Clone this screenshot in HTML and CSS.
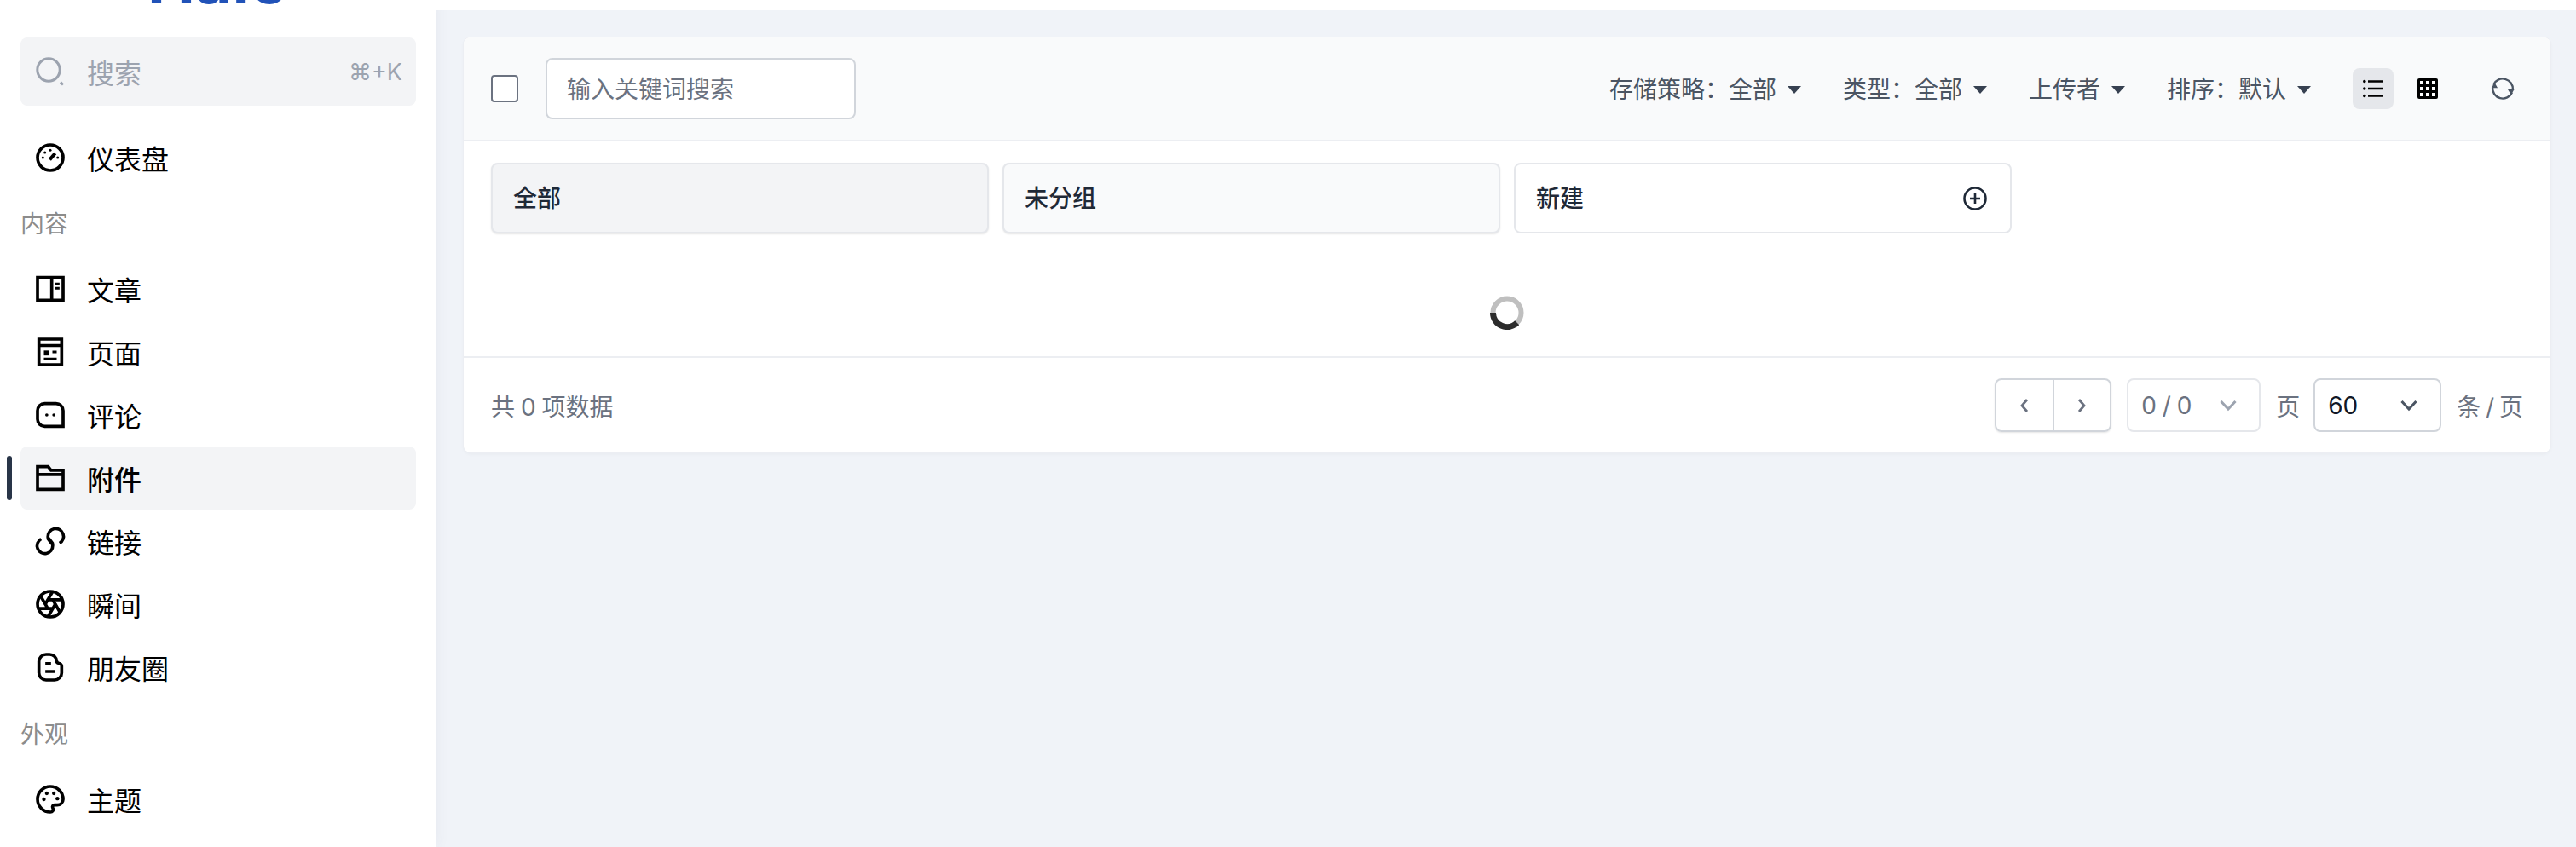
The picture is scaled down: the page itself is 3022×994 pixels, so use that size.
FILE: index.html
```html
<!DOCTYPE html>
<html lang="zh-CN">
<head>
<meta charset="utf-8">
<title>附件</title>
<link rel="stylesheet" href="styles.css">
</head>
<body>
<aside class="sidebar">
  <div class="logo"><span>Halo</span></div>
  <div class="search">
    <svg class="ico" viewBox="0 0 40 40"><circle cx="18" cy="18" r="13.2"/><path d="M32 32.5l3 3"/></svg>
    <span class="search-text">搜索</span>
    <span class="kbd">⌘+K</span>
  </div>
  <nav class="nav">
    <a class="item">
      <svg class="ico" viewBox="0 0 24 24"><circle cx="12" cy="12" r="9"/><path d="M11.6 13.4L15.4 9" stroke-width="2.4"/><circle class="dot" cx="12" cy="6.8" r=".9"/><circle class="dot" cx="8.2" cy="8.4" r=".9"/><circle class="dot" cx="6.8" cy="12" r=".9"/><circle class="dot" cx="17.2" cy="12" r=".9"/></svg>
      <span>仪表盘</span>
    </a>
    <div class="label">内容</div>
    <a class="item">
      <svg class="ico" viewBox="0 0 24 24"><path d="M3 4h18v16H3zM13 4v16"/><path d="M15.500 8.500h3M15.500 11.500h3" stroke-width="1.800"/></svg>
      <span>文章</span>
    </a>
    <a class="item">
      <svg class="ico" viewBox="0 0 24 24"><path d="M4 3h16v18H4zM4 7.500h16"/><path d="M7.500 14.500h3.500v-3.500H7.500z" class="fill"/><path d="M13.500 12h3M7.500 17h9" stroke-width="1.800"/></svg>
      <span>页面</span>
    </a>
    <a class="item">
      <svg class="ico" viewBox="0 0 24 24"><path d="M8 4h8a5 5 0 0 1 5 5v11H8a5 5 0 0 1-5-5V9a5 5 0 0 1 5-5z"/><circle class="dot" cx="9.500" cy="12" r="1.100"/><circle class="dot" cx="14.500" cy="12" r="1.100"/></svg>
      <span>评论</span>
    </a>
    <a class="item active">
      <svg class="ico" viewBox="0 0 24 24"><path d="M3 4h7.500l2 2.500H21V20H3zM3 9.500h18"/></svg>
      <span>附件</span>
    </a>
    <a class="item">
      <svg class="ico" viewBox="0 0 24 24"><path d="M18.500 13.500a5.500 5.500 0 1 0-8.200-4.600l.2 1.600 2.700 3.500"/><path d="M5.500 10.500a5.500 5.500 0 1 0 8.200 4.600l-.2-1.600-2.700-3.500"/></svg>
      <span>链接</span>
    </a>
    <a class="item">
      <svg class="ico" viewBox="0 0 24 24"><circle cx="12" cy="12" r="9"/><path d="M15.500 12L13.750 15.030H10.250L8.500 12 10.250 8.970H13.750zM13.750 15.030L10.390 20.850M10.250 15.030H3.530M8.500 12L5.140 6.180M10.250 8.970L13.610 3.150M13.750 8.970H20.470M15.500 12L18.860 17.820"/></svg>
      <span>瞬间</span>
    </a>
    <a class="item">
      <svg class="ico" viewBox="0 0 24 24"><path d="M4 8a5 5 0 0 1 5-5h2.500a5 5 0 0 1 5 4.700c0 1 .7 1.500 1.700 1.600 1 .1 1.800 1 1.800 2V16a5 5 0 0 1-5 5H9a5 5 0 0 1-5-5z"/><path d="M8.500 9.500h4M8.500 15h7"/></svg>
      <span>朋友圈</span>
    </a>
    <div class="label label-two">外观</div>
    <a class="item">
      <svg class="ico" viewBox="0 0 24 24"><path d="M12 3a9 9 0 0 1 9 9c0 2.500-2 4-4.200 4H15c-1.200 0-1.800 1-1.300 2 .5 1 .5 1.600 0 2.200-.4.6-1 .8-1.700.8a9 9 0 0 1 0-18z"/><circle class="dot" cx="7.500" cy="12" r="1.300"/><circle class="dot" cx="9.500" cy="7.800" r="1.300"/><circle class="dot" cx="14.500" cy="7.800" r="1.300"/><circle class="dot" cx="17" cy="11.500" r="1.300"/></svg>
      <span>主题</span>
    </a>
  </nav>
</aside>
<main class="main">
  <div class="topbar"></div>
  <section class="card">
    <header class="toolbar">
      <span class="checkbox"></span>
      <div class="keyword">输入关键词搜索</div>
      <div class="filters">
        <div class="filter"><span>存储策略：全部</span><i class="caret"></i></div>
        <div class="filter"><span>类型：全部</span><i class="caret"></i></div>
        <div class="filter"><span>上传者</span><i class="caret"></i></div>
        <div class="filter"><span>排序：默认</span><i class="caret"></i></div>
        <div class="views">
          <span class="view on">
            <svg viewBox="0 0 24 24" width="24" height="24"><path class="dk" d="M6 3.500h18M6 12h18M6 20.500h18" stroke-width="2.400"/><circle cx="1.800" cy="3.500" r="1.800"/><circle cx="1.800" cy="12" r="1.800"/><circle cx="1.800" cy="20.500" r="1.800"/></svg>
          </span>
          <span class="view">
            <svg viewBox="0 0 24 24" width="24" height="24"><rect width="24" height="24" rx="2"/><path class="wh" d="M3 3h4v4H3zM10 3h4v4h-4zM17 3h4v4h-4zM3 10h4v4H3zM10 10h4v4h-4zM17 10h4v4h-4zM3 17h4v4H3zM10 17h4v4h-4zM17 17h4v4h-4z"/></svg>
          </span>
          <span class="view refresh">
            <svg viewBox="0 0 28 28" width="28" height="28"><path class="rf" d="M3 9.500A12 12 0 0 1 25.900 15.500M25 18.500A12 12 0 0 1 2.100 12.500"/><path class="rf-fill" d="M.7 13.200L4.500 7l3.600 6.200zM20 15l3.800 6.200L27.500 15z"/></svg>
          </span>
        </div>
      </div>
    </header>
    <div class="content">
      <div class="tabs">
        <div class="tab current"><span>全部</span></div>
        <div class="tab shaded"><span>未分组</span></div>
        <div class="tab plain">
          <span>新建</span>
          <svg viewBox="0 0 28 28" width="28" height="28"><circle cx="14" cy="14" r="12.500"/><path d="M14 8v12M8 14h12"/></svg>
        </div>
      </div>
      <div class="loading">
        <svg viewBox="0 0 40 40" width="40" height="40"><circle class="sp-bg" cx="20" cy="20" r="16.500"/><path class="sp-fg" d="M3.500 20A16.500 16.500 0 0 0 31.700 31.700"/></svg>
      </div>
    </div>
    <footer class="footer">
      <span class="total">共 0 项数据</span>
      <div class="pager">
        <div class="prevnext">
          <span class="arrow"><svg viewBox="0 0 16 24" width="16" height="24"><path d="M11 5L5 12l6 7"/></svg></span>
          <span class="arrow split"><svg viewBox="0 0 16 24" width="16" height="24"><path d="M5 5l6 7-6 7"/></svg></span>
        </div>
        <div class="select disabled"><span>0 / 0</span><svg viewBox="0 0 20 14" width="20" height="14"><path d="M1.500 2L10 11l8.500-9"/></svg></div>
        <span class="unit page-unit">页</span>
        <div class="select size"><span>60</span><svg viewBox="0 0 20 14" width="20" height="14"><path d="M1.500 2L10 11l8.500-9"/></svg></div>
        <span class="unit">条 / 页</span>
      </div>
    </footer>
  </section>
</main>
</body>
</html>
```

FILE: styles.css
```css
* { box-sizing: border-box; }
html, body { height: 100%; }
body {
  margin: 0;
  display: flex;
  height: 994px;
  overflow: hidden;
  background: #f0f3f8;
  font-family: Inter, "Noto Sans CJK SC", sans-serif;
  font-size: 28px;
  color: #111827;
}
.sidebar {
  flex: 0 0 512px;
  height: 994px;
  padding: 0 24px;
  background: #fff;
  box-shadow: 0 0 16px rgba(60, 70, 110, .06);
  overflow: hidden;
}
.logo {
  height: 44px;
  display: flex;
  justify-content: center;
  overflow: hidden;
}
.logo span {
  margin-top: -68px;
  font-size: 75px;
  line-height: 90px;
  font-weight: 700;
  color: #2152b8;
}
.ico {
  flex: none;
  width: 40px;
  height: 40px;
  fill: none;
  stroke: #000;
  stroke-width: 2.2;
}
.ico .dot { fill: #000; stroke: none; }
.ico .fill { fill: #000; stroke: none; }
.search {
  display: flex;
  align-items: center;
  height: 80px;
  padding: 0 16px 0 15px;
  border-radius: 8px;
  background: #f3f4f6;
  color: #9ca3af;
}
.search .ico { stroke: #9ca3af; stroke-width: 3; }
.search-text {
  flex: 1;
  margin-left: 23px;
  font-size: 32px;
}
.kbd { font-size: 27px; }
.nav { margin-top: 24px; }
.item {
  display: flex;
  align-items: center;
  height: 74px;
  padding-left: 15px;
  border-radius: 8px;
  color: #000;
  font-size: 32px;
  position: relative;
}
.item span { margin: 0 0 1px 23px; }
.active { background: #f3f4f6; font-weight: 500; }
.active::before {
  content: "";
  position: absolute;
  left: -16px;
  top: 11px;
  width: 6px;
  height: 52px;
  border-radius: 3px;
  background: #293548;
}
.label {
  height: 40px;
  margin: 21px 0 19px;
  color: #8c8c8c;
  font-size: 28px;
  line-height: 40px;
}
.label-two { margin-top: 22px; }
.main {
  flex: 1;
  min-width: 0;
  padding-right: 30px;
}
.topbar {
  height: 12px;
  margin-right: -30px;
  background: #fff;
}
.card {
  margin: 32px 0 0 32px;
  border-radius: 8px;
  background: #fff;
  box-shadow: 0 0 0 1px #eceef3, 0 2px 4px rgba(0, 0, 0, .04);
  overflow: hidden;
}
.toolbar {
  display: flex;
  align-items: center;
  height: 122px;
  padding: 0 32px;
  background: #f9fafb;
  border-bottom: 2px solid #eceef2;
}
.checkbox {
  width: 32px;
  height: 32px;
  border: 2px solid #6b7280;
  border-radius: 4px;
  background: #fff;
}
.keyword {
  display: flex;
  align-items: center;
  width: 364px;
  height: 72px;
  margin-left: 32px;
  padding: 0 0 3px 23px;
  border: 2px solid #d1d5db;
  border-radius: 8px;
  background: #fff;
  color: #6b7280;
}
.filters {
  display: flex;
  align-items: center;
  gap: 48px;
  margin-left: auto;
  color: #4b5563;
}
.filter { display: flex; align-items: center; }
.filter span { margin-bottom: 3px; }
.caret {
  width: 0;
  height: 0;
  margin: 2px 1px 0 13px;
  border-style: solid;
  border-width: 9px 8px 0;
  border-color: #374151 transparent transparent;
}
.views { display: flex; align-items: center; gap: 16px; }
.view {
  display: flex;
  align-items: center;
  justify-content: center;
  width: 48px;
  height: 48px;
  border-radius: 8px;
}
.view.on { background: #e5e7eb; }
.view .dk { fill: none; stroke: #000; }
.view .wh { fill: #fff; }
.refresh { margin-left: 24px; }
.rf { fill: none; stroke: #4b5563; stroke-width: 2.4; }
.rf-fill { fill: #4b5563; }
.content { padding: 25px 32px 0; }
.tabs {
  display: grid;
  grid-template-columns: repeat(4, 1fr);
  gap: 16px;
}
.tab {
  display: flex;
  align-items: center;
  justify-content: space-between;
  height: 83px;
  padding: 0 27px 0 24px;
  border: 2px solid #e5e7eb;
  border-radius: 8px;
  color: #1f2937;
  font-weight: 500;
}
.tab span { margin-bottom: 3px; }
.current { background: #f3f4f6; box-shadow: 0 1px 2px rgba(0, 0, 0, .1); }
.shaded { background: #f9fafb; box-shadow: 0 1px 2px rgba(0, 0, 0, .1); }
.plain { background: #fff; }
.plain svg { fill: none; stroke: #1f2937; stroke-width: 2.6; }
.loading {
  display: flex;
  align-items: center;
  justify-content: center;
  height: 144px;
  padding-top: 42px;
}
.sp-bg { fill: none; stroke: #bfbfbf; stroke-width: 6; }
.sp-fg { fill: none; stroke: #2c2c2c; stroke-width: 7; }
.footer {
  display: flex;
  align-items: center;
  justify-content: space-between;
  height: 113px;
  padding: 0 32px;
  border-top: 2px solid #eceef2;
  color: #6b7280;
}
.total { word-spacing: -1px; }
.pager { display: flex; align-items: center; gap: 18px; }
.prevnext {
  display: flex;
  width: 137px;
  height: 63px;
  border: 2px solid #d1d5db;
  border-radius: 8px;
  box-shadow: 0 1px 2px rgba(0, 0, 0, .1);
}
.arrow {
  flex: 1;
  display: flex;
  align-items: center;
  justify-content: center;
}
.arrow svg { fill: none; stroke: #6b7280; stroke-width: 2.800; }
.split { border-left: 2px solid #d1d5db; }
.unit { word-spacing: -2px; }
.page-unit { margin-right: -2px; }
.select {
  display: flex;
  align-items: center;
  justify-content: space-between;
  width: 157px;
  height: 63px;
  padding: 0 26px 0 15px;
  border: 2px solid #e5e7eb;
  border-radius: 8px;
  word-spacing: -1px;
}
.select svg { fill: none; stroke: #9ca3af; stroke-width: 3; }
.size {
  width: 150px;
  border-color: #d1d5db;
  color: #111827;
}
.size svg { stroke: #4b5563; }
```
